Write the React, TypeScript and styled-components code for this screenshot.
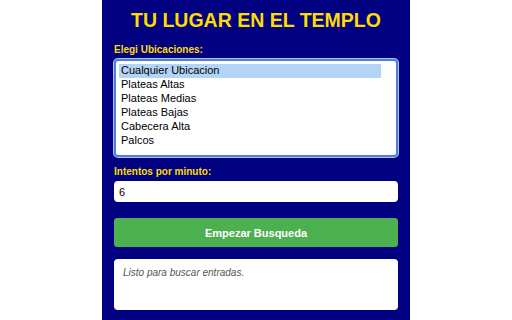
import styled, { createGlobalStyle } from "styled-components"

const GlobalStyle = createGlobalStyle`
  html, body {
    margin: 0;
    padding: 0;
    background: #ffffff;
    font-family: "Liberation Sans", Arial, sans-serif;
  }
`

const Panel = styled.div`
  width: 308px;
  min-height: 100vh;
  margin: 0 auto;
  box-sizing: border-box;
  padding: 8px 12px 12px 12px;
  background: #000080;
  display: flex;
  flex-direction: column;
`

const Title = styled.h1`
  margin: 0 0 12px 0;
  font-size: 19.5px;
  line-height: 24px;
  font-weight: bold;
  color: #ffdc00;
  text-align: center;
`

const Label = styled.label`
  display: block;
  font-size: 10px;
  line-height: 12px;
  font-weight: bold;
  color: #ffdc00;
  margin-bottom: 3px;
`

const ListBox = styled.div`
  height: 98px;
  box-sizing: border-box;
  background: #ffffff;
  border: 2px solid #4c7fdc;
  box-shadow: 0 0 0 1px #a9c3ee;
  border-radius: 4px;
  padding: 3px 15px 3px 3px;
  margin-bottom: 9px;
`

const Option = styled.div<{ $selected?: boolean }>`
  height: 14px;
  line-height: 13px;
  padding-left: 2px;
  font-size: 11px;
  color: #000000;
  background: ${(p) => (p.$selected ? "#b3d3f7" : "transparent")};
`

const Input = styled.input`
  display: block;
  width: 100%;
  height: 21px;
  box-sizing: border-box;
  border: none;
  border-radius: 4px;
  padding: 0 5px;
  font-family: "Liberation Sans", Arial, sans-serif;
  font-size: 11px;
  color: #000000;
  background: #ffffff;
  outline: none;
  margin-bottom: 16px;
`

const Button = styled.button`
  height: 29px;
  border: none;
  border-radius: 3px;
  background: #4caf50;
  color: #ffffff;
  font-family: "Liberation Sans", Arial, sans-serif;
  font-size: 11px;
  font-weight: bold;
  cursor: pointer;
  margin-bottom: 12px;
`

const Status = styled.div`
  height: 51px;
  box-sizing: border-box;
  background: #ffffff;
  border-radius: 4px;
  padding: 8px 9px;
  font-size: 10px;
  line-height: 12px;
  font-style: italic;
  color: #555555;
`

const locations = [
  "Cualquier Ubicacion",
  "Plateas Altas",
  "Plateas Medias",
  "Plateas Bajas",
  "Cabecera Alta",
  "Palcos",
]

export default function App() {
  return (
    <>
      <GlobalStyle />
      <Panel>
        <Title>TU LUGAR EN EL TEMPLO</Title>
        <Label>Elegi Ubicaciones:</Label>
        <ListBox>
          {locations.map((loc, i) => (
            <Option key={loc} $selected={i === 0}>
              {loc}
            </Option>
          ))}
        </ListBox>
        <Label>Intentos por minuto:</Label>
        <Input defaultValue="6" />
        <Button>Empezar Busqueda</Button>
        <Status>Listo para buscar entradas.</Status>
      </Panel>
    </>
  )
}
